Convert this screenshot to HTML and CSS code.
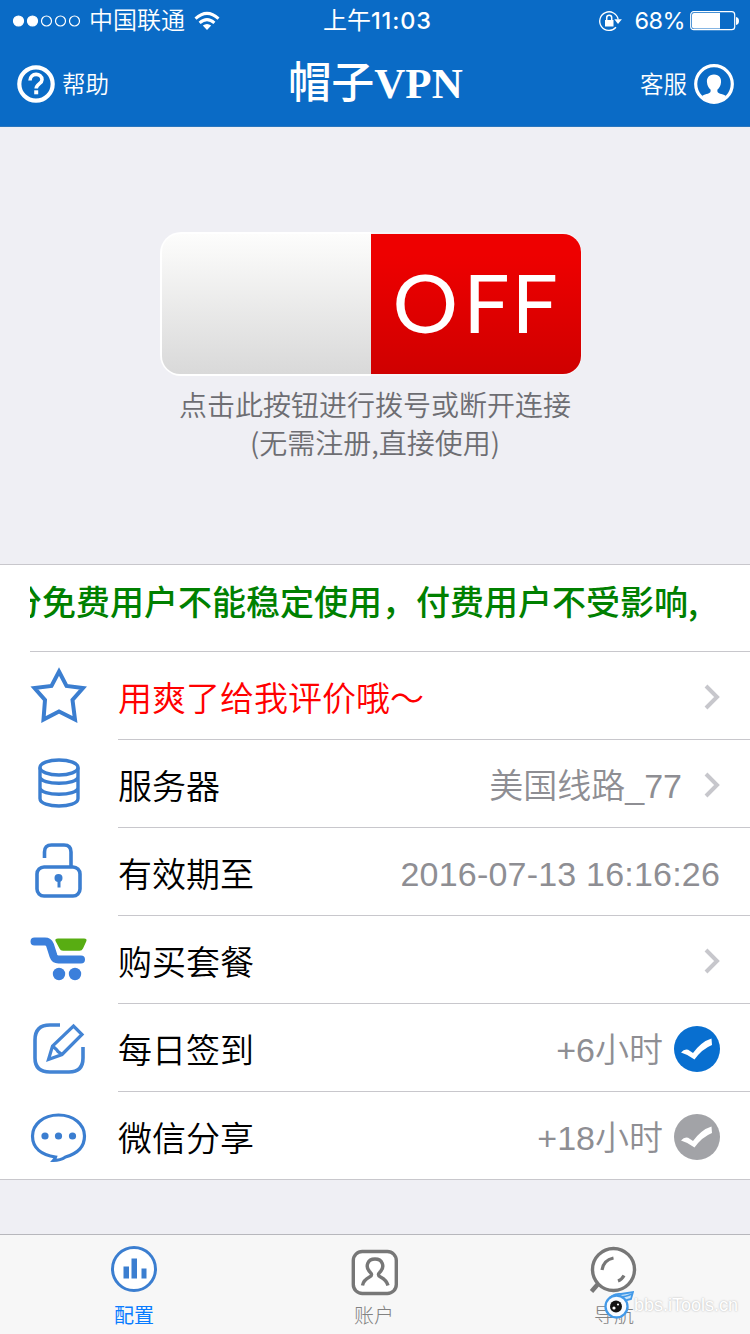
FILE: index.html
```html
<!DOCTYPE html>
<html lang="zh-CN">
<head>
<meta charset="utf-8">
<title>帽子VPN</title>
<link rel="stylesheet" href="styles.css">
</head>
<body>
<div class="app">
  <header class="header">
    <div class="status">
      <div class="status-left">
        <svg class="signal" width="70" height="14" viewBox="0 0 70 14" fill="none" stroke="#fff" stroke-width="1.2"><circle cx="6.5" cy="7" r="5" fill="#fff"/><circle cx="20.5" cy="7" r="5" fill="#fff"/><circle cx="34.5" cy="7" r="5"/><circle cx="48.5" cy="7" r="5"/><circle cx="62.5" cy="7" r="5"/></svg>
        <span class="carrier">中国联通</span>
        <svg class="wifi" width="26" height="20" viewBox="0 0 26 20" fill="none" stroke="#fff" stroke-width="3"><path d="M1.5 7.6Q13-2.8 24.5 7.6"/><path d="M5.6 11.9Q13 5.3 20.4 11.9"/><path d="M8.8 14.6Q13 11.2 17.2 14.6L13 19Z" fill="#fff" stroke="none"/></svg>
      </div>
      <div class="clock">上午<span class="clock-digits">11:03</span></div>
      <div class="status-right">
        <svg width="26" height="22" viewBox="0 0 26 22" fill="none" stroke="#fff" stroke-width="1.3"><path d="M18 17.300A9.300 9.300 0 1 1 20.200 9.500"/><path d="M16.300 9.300h7.600L20 14Z" fill="#fff" stroke="none"/><path d="M7 10h8.500v6.500H7Z" fill="#fff" stroke="none"/><path d="M8.700 10.500V7.800a2.500 2.500 0 0 1 5 0v2.700" stroke-width="1.500"/></svg>
        <span class="percent">68%</span>
        <svg width="49" height="20" viewBox="0 0 49 20"><rect x=".7" y=".7" width="44" height="18" rx="3" fill="none" stroke="#fff" stroke-width="1.2"/><path d="M2 4q0-2 2-2h26v15.500H4q-2 0-2-2Z" fill="#fff"/><path d="M46 6q3 .5 3 4t-3 4Z" fill="#fff"/></svg>
      </div>
    </div>
    <nav class="nav">
      <div class="nav-item">
        <svg width="38" height="38" viewBox="0 0 38 38" fill="none" stroke="#fff"><circle cx="19" cy="19" r="16.700" stroke-width="4.200"/><path d="M13 15.500c0-8 12-8 12-.8 0 4.200-5.800 4.300-5.800 8.800" stroke-width="3.600"/><path d="M17.200 25.300h4v4h-4Z" fill="#fff" stroke="none"/></svg>
        <span class="nav-text">帮助</span>
      </div>
      <h1 class="title">帽子<span class="title-latin">VPN</span></h1>
      <div class="nav-item nav-item-end">
        <span class="nav-text">客服</span>
        <svg width="40" height="40" viewBox="0 0 40 40"><circle cx="20" cy="20" r="18.300" fill="none" stroke="#fff" stroke-width="3.200"/><path d="M20 10.500c-5.500 0-7.500 4-7 8 .3 3 1.500 5.500 3.500 7 .7 3-1 4-5.500 5q-2 .5-3 1.500C15 39.500 25 39.500 32 32q-1-1-3-1.500c-4.500-1-6.200-2-5.500-5 2-1.500 3.200-4 3.500-7 .5-4-1.500-8-7-8Z" fill="#fff"/></svg>
      </div>
    </nav>
  </header>

  <section class="hero">
    <div class="switch"><div class="knob"></div><div class="switch-off"><span class="wide">O</span>FF</div></div>
    <p class="hint">点击此按钮进行拨号或断开连接<br>(无需注册,直接使用)</p>
  </section>

  <main class="list">
    <div class="notice"><div class="notice-window"><span class="notice-text">分免费用户不能稳定使用，付费用户不受影响,</span></div></div>
    <div class="row">
      <svg class="icon" width="58" height="60" viewBox="0 0 58 60" fill="none" stroke="#3b7ed0" stroke-width="4"><path d="M29 5.500 36.500 20 53 22 42.500 34 45 53.500 29 45.500 13.500 53.500 15 34 4.500 22 21.500 20Z"/></svg>
      <div class="cell"><span class="label label-red">用爽了给我评价哦～</span><svg class="chevron" width="18" height="28" viewBox="0 0 18 28"><path d="m3 3 11 11L3 25"/></svg></div>
    </div>
    <div class="row">
      <svg class="icon" width="58" height="60" viewBox="0 0 58 60" fill="none" stroke="#3b7ed0" stroke-width="3.400"><ellipse cx="29" cy="13.500" rx="19" ry="7.500"/><path d="M10 13.500v31c0 10 38 10 38 0v-31M10 22.500c0 9 38 9 38 0M10 33.500c0 9 38 9 38 0"/></svg>
      <div class="cell"><span class="label">服务器</span><span class="value value-server">美国线路_77</span><svg class="chevron" width="18" height="28" viewBox="0 0 18 28"><path d="m3 3 11 11L3 25"/></svg></div>
    </div>
    <div class="row">
      <svg class="icon" width="58" height="60" viewBox="0 0 58 60" fill="none" stroke="#3b7ed0" stroke-width="3.600"><rect x="7" y="25" width="43" height="29" rx="7"/><path d="M14.500 16v-6q0-7 7-7h12.500q7 0 7 7v15"/><circle cx="28.500" cy="36" r="4" fill="#3b7ed0" stroke="none"/><path d="M29 36v9.500" stroke-width="3"/></svg>
      <div class="cell"><span class="label">有效期至</span><span class="value value-date">2016-07-13 16:16:26</span></div>
    </div>
    <div class="row">
      <svg class="icon" width="58" height="60" viewBox="0 0 58 60" fill="none"><path d="M4.500 11.500h10.500q3.500 0 5 3.500L23.500 26q1.200 3.500 5 3.500H51" stroke="#3b7fdb" stroke-width="8" stroke-linecap="round" stroke-linejoin="round"/><path d="M28 8.500h26q3.500 0 2.200 3L53 18.500q-1 2.300-3.500 2.300H33q-2.500 0-3.500-2.300l-4-7.500q-1-2.500 2.500-2.500Z" fill="#58ad12"/><circle cx="29" cy="44" r="6.200" fill="#3b7fdb"/><circle cx="45" cy="44" r="6.200" fill="#3b7fdb"/></svg>
      <div class="cell"><span class="label">购买套餐</span><svg class="chevron" width="18" height="28" viewBox="0 0 18 28"><path d="m3 3 11 11L3 25"/></svg></div>
    </div>
    <div class="row">
      <svg class="icon" width="58" height="60" viewBox="0 0 58 60" fill="none" stroke="#4384d4" stroke-width="3.600"><path d="M30 7H20Q5 7 5 22v18q0 14 15 14h19q14 0 14-14V29"/><path d="M18.500 41.500 22.500 28 43.500 8 52 16.500 32 36.500ZM22.500 28l4 3.500 1.500 2 4 3" stroke-width="3.200"/></svg>
      <div class="cell"><span class="label">每日签到</span><span class="value">+6小时</span><svg class="check" width="46" height="46" viewBox="0 0 46 46"><circle cx="23" cy="23" r="23" fill="#086fd0"/><path d="M7 26.500Q11.500 21.500 16 25L19 27Q27.500 15.500 37.500 12.500L38 19Q28 23 20.500 33.500Q14 28.500 7 26.500Z" fill="#fff"/></svg></div>
    </div>
    <div class="row row-last">
      <svg class="icon" width="58" height="60" viewBox="0 0 58 60" fill="none" stroke="#3b7ed0" stroke-width="3.200"><path d="M28.500 9C13 9 2.500 18.500 2.500 30c0 12 9 19 23 21-.5 1.500-1 2.300-2 3.500 6 0 9-1.500 12-3.500C48 47.500 54.500 41 54.500 30 54.500 18.500 44 9 28.500 9Z"/><g fill="#3b7ed0" stroke="none"><circle cx="15" cy="30" r="3.600"/><circle cx="28.500" cy="30" r="3.600"/><circle cx="42.500" cy="30" r="3.600"/></g></svg>
      <div class="cell"><span class="label">微信分享</span><span class="value">+18小时</span><svg class="check" width="46" height="46" viewBox="0 0 46 46"><circle cx="23" cy="23" r="23" fill="#a2a3a7"/><path d="M7 26.500Q11.500 21.500 16 25L19 27Q27.500 15.500 37.500 12.500L38 19Q28 23 20.500 33.500Q14 28.500 7 26.500Z" fill="#fff"/></svg></div>
    </div>
  </main>

  <footer class="tabs">
    <div class="tab tab-active">
      <svg width="50" height="52" viewBox="0 0 50 52"><circle cx="25" cy="25" r="21.500" fill="#fff" stroke="#3b7ed0" stroke-width="3"/><path d="M14.500 22.500h5.500v12h-5.500ZM22.500 14.500h5.500v20h-5.500ZM32.500 24.500h5v10h-5Z" fill="#3b7ed0"/></svg>
      <span>配置</span>
    </div>
    <div class="tab">
      <svg width="50" height="52" viewBox="0 0 50 52" fill="none" stroke="#777" stroke-width="3.400"><rect x="4.300" y="7.500" width="43" height="42" rx="9" fill="#fff"/><path d="M13.500 41.500q1-5.500 7-8.500c3-1.500 2.500-3 0-5.500-4.500-5-2-12.500 5.500-12.500s10 7.500 5.500 12.500c-2.500 2.500-3 4 0 5.500q6 3 7.500 8.500"/></svg>
      <span>账户</span>
    </div>
    <div class="tab">
      <svg width="50" height="52" viewBox="0 0 50 52" fill="none" stroke="#777" stroke-width="3.400"><circle cx="24.500" cy="25.500" r="21" fill="#fff"/><path d="M9 40 2.500 47.500" stroke-width="4.500"/><path d="M13 26q1.500-10 11.500-12M29 37q4-1.500 6-5.500" stroke-width="3.200"/></svg>
      <span>导航</span>
    </div>
    <div class="watermark">
      <svg width="30" height="30" viewBox="0 0 30 30"><path d="M4 11Q8 3 17 4L29 2 27 9Q21 10 21 12" fill="#cce4f8" stroke="#4299e8" stroke-width="1.800"/><path d="M14 7q8 0 14-3" stroke="#4299e8" stroke-width="1.500" fill="none"/><circle cx="12.500" cy="16.500" r="11" fill="#f8fbff" stroke="#4299e8" stroke-width="2.300"/><circle cx="12" cy="16.500" r="6" fill="#151515"/><circle cx="10" cy="18" r="1.600" fill="#fff"/><circle cx="14" cy="14.500" r="1.100" fill="#fff"/></svg>
      <span>bbs.iTools.cn</span>
    </div>
  </footer>
</div>
</body>
</html>
```

FILE: styles.css
```css
* { box-sizing: border-box; }
body { margin: 0; font-family: "Liberation Sans", "Noto Sans CJK SC", sans-serif; }
svg { display: block; flex: none; }
.app { display: flex; flex-direction: column; width: 750px; height: 1334px; overflow: hidden; background: #efeff4; }

.header { height: 127px; flex: none; background: #0a6bc6; color: #fff; border-bottom: 1px solid #2a76bd; }
.status { display: grid; grid-template-columns: 1fr auto 1fr; align-items: center; height: 41px; padding: 0 11px 0 12px; font-size: 24px; line-height: 40px; }
.status-left, .status-right { display: flex; align-items: center; }
.status-right { justify-content: flex-end; }
.carrier { margin: 0 9px 0 7px; padding-top: 1px; font-weight: 350; }
.clock { padding: 1px 0 0 4px; white-space: nowrap; }
.clock-digits { font-family: Inter, sans-serif; font-weight: 500; font-size: 23.500px; letter-spacing: .9px; }
.percent { margin: 0 5px 0 11px; font-family: Inter, sans-serif; font-size: 23.500px; letter-spacing: -.6px; }
.nav { display: grid; grid-template-columns: 1fr auto 1fr; align-items: center; height: 86px; padding: 0 16px 0 17px; }
.nav-item { display: flex; align-items: center; gap: 7px; font-size: 23.500px; font-weight: 350; line-height: 36px; }
.nav-text { padding-top: 1px; }
.nav-item-end { justify-content: flex-end; }
.title { margin: 0; padding-bottom: 2px; font-size: 43px; line-height: 60px; font-weight: 500; }
.title-latin { font-family: "Liberation Serif", serif; font-weight: 700; }

.hero { flex: none; height: 437px; padding-top: 105px; display: flex; flex-direction: column; align-items: center; }
.switch { display: flex; width: 422px; height: 144px; margin-right: 9px; padding: 2px 1px 2px 2px; border-radius: 21px; background: linear-gradient(90deg, #fff 50%, #f6f4f7 50%); overflow: hidden; }
.knob { width: 209px; border-radius: 18px 0 0 18px; background: linear-gradient(#fdfdfc, #d9d9d9); }
.switch-off { flex: 1; border-radius: 0 18px 18px 0; background: linear-gradient(#ee0000 15%, #cf0000); color: #fff; font: 400 82px/134px Lato, sans-serif; letter-spacing: 2px; padding-left: 22px; }
.wide { letter-spacing: 5px; }
.hint { margin: 9px 0 0; text-align: center; font-size: 28px; line-height: 38px; font-weight: 350; color: #6d6d72; font-family: "Noto Sans CJK SC", sans-serif; }

.list { flex: none; background: #fff; border-top: 1px solid #c8c7cc; border-bottom: 1px solid #c8c7cc; }
.notice { padding-left: 30px; }
.notice-window { height: 87px; border-bottom: 1px solid #c8c7cc; overflow: hidden; }
.notice-text { display: block; width: 800px; margin-left: -22px; font-size: 34px; line-height: 72px; font-weight: 500; color: #008000; font-family: "Noto Sans CJK SC", sans-serif; }
.row { display: flex; height: 88px; padding-left: 30px; }
.icon { margin: 14px 30px 0 0; }
.cell { flex: 1; display: flex; align-items: center; padding-right: 30px; border-bottom: 1px solid #c8c7cc; font-size: 34px; }
.row-last { height: 87px; }
.row-last .cell { border-bottom: 0; }
.label { font-weight: 350; color: #000; line-height: 50px; padding-top: 7px; }
.label-red { color: #f00; }
.chevron { margin: 2px -1px 0 auto; fill: none; stroke: #c7c7cc; stroke-width: 4; }
.value { margin-left: auto; color: #8e8e93; font-weight: 350; line-height: 50px; padding-top: 5px; }
.value-server + .chevron { margin-left: 21px; }
.value-date { letter-spacing: .2px; padding-top: 4px; }
.check { margin: 2px 0 0 11px; }

.tabs { position: relative; margin-top: auto; height: 100px; display: grid; grid-template-columns: 240px 240px 240px; padding-left: 14px; background: #f7f7f7; border-top: 1px solid #b7b7bc; }
.tab { display: flex; flex-direction: column; align-items: center; padding-top: 9px; font-size: 20px; line-height: 38px; font-weight: 300; color: #828282; }
.tab-active { color: #087cff; font-weight: 400; }
.tab span { padding-top: 1px; }
.watermark { position: absolute; left: 604px; top: 55px; display: flex; align-items: center; color: #fff; font: 400 18px/28px "Liberation Sans", sans-serif; text-shadow: 0 0 2px #aaa; }
```
